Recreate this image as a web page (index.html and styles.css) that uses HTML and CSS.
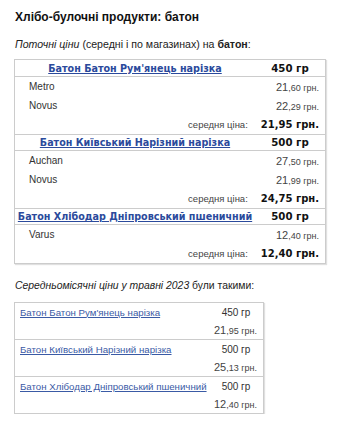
FILE: index.html
```html
<!DOCTYPE html>
<html lang="uk">
<head>
<meta charset="utf-8">
<link rel="stylesheet" href="styles.css">
</head>
<body>
<div class="page">
  <h1 class="title">Хлібо-булочні продукти: батон</h1>
  <p class="intro"><i>Поточні ціни</i> (середні і по магазинах) на <b>батон</b>:</p>

  <div class="ptable">
    <div class="prow head"><a href="#" class="pname">Батон Батон Рум'янець нарізка</a><span class="pweight">450 гр</span></div>
    <div class="prow shop"><span class="sname">Metro</span><span class="price"><span class="big">21</span>,60 грн.</span></div>
    <div class="prow shop"><span class="sname">Novus</span><span class="price"><span class="big">22</span>,29 грн.</span></div>
    <div class="prow avg"><span class="alabel">середня ціна:</span><span class="aval">21,95 грн.</span></div>

    <div class="prow head"><a href="#" class="pname">Батон Київський Нарізний нарізка</a><span class="pweight">500 гр</span></div>
    <div class="prow shop"><span class="sname">Auchan</span><span class="price"><span class="big">27</span>,50 грн.</span></div>
    <div class="prow shop"><span class="sname">Novus</span><span class="price"><span class="big">21</span>,99 грн.</span></div>
    <div class="prow avg"><span class="alabel">середня ціна:</span><span class="aval">24,75 грн.</span></div>

    <div class="prow head"><a href="#" class="pname">Батон Хлібодар Дніпровський пшеничний</a><span class="pweight">500 гр</span></div>
    <div class="prow shop"><span class="sname">Varus</span><span class="price"><span class="big">12</span>,40 грн.</span></div>
    <div class="prow avg"><span class="alabel">середня ціна:</span><span class="aval">12,40 грн.</span></div>
  </div>

  <p class="intro month"><i>Середньомісячні ціни у травні 2023</i> були такими:</p>

  <div class="mtable">
    <div class="mrow">
      <div class="mline"><a href="#" class="mname">Батон Батон Рум'янець нарізка</a><span class="mweight">450 гр</span></div>
      <div class="mline"><span class="spacer"></span><span class="mprice"><span class="big">21</span>,95 грн.</span></div>
    </div>
    <div class="mrow">
      <div class="mline"><a href="#" class="mname">Батон Київський Нарізний нарізка</a><span class="mweight">500 гр</span></div>
      <div class="mline"><span class="spacer"></span><span class="mprice"><span class="big">25</span>,13 грн.</span></div>
    </div>
    <div class="mrow">
      <div class="mline"><a href="#" class="mname">Батон Хлібодар Дніпровський пшеничний</a><span class="mweight">500 гр</span></div>
      <div class="mline"><span class="spacer"></span><span class="mprice"><span class="big">12</span>,40 грн.</span></div>
    </div>
  </div>
</div>
</body>
</html>
```
FILE: styles.css
```css
* { box-sizing: border-box; }
html, body { margin: 0; padding: 0; background: #fff; }
body { font-family: "Liberation Sans", Arial, sans-serif; color: #222; }
.page { padding: 10px 14px 0 14px; }
.title { font-size: 12px; font-weight: bold; margin: 0; line-height: 15px; color: #111; padding-left: 1px; }
.intro { font-size: 10.6px; margin: 12px 0 0 0; line-height: 14px; color: #222; padding-left: 1px; }
.ptable {
  margin-top: 8px;
  width: 312px;
  border: 1px solid #ccc;
  box-shadow: 1px 1px 1px rgba(0,0,0,0.12);
}
.prow { display: flex; align-items: center; }
.head {
  height: 17px;
  border-bottom: 1px solid #ccc;
  font-family: "DejaVu Sans", Verdana, sans-serif;
  font-weight: bold;
  font-size: 9.6px;
}
.prow.avg + .head { border-top: 1px solid #ccc; }
.pname { flex: 1; text-align: center; color: #2b4a9c; text-decoration: underline; white-space: nowrap; }
.pweight { width: 70px; text-align: center; color: #111; font-size: 10.2px; }
.shop { height: 19px; font-size: 10px; padding: 0 6px 0 14px; }
.sname { flex: 1; color: #333; }
.price { color: #444; font-size: 9px; }
.big { font-size: 11px; }
.avg { height: 19px; justify-content: flex-end; padding-right: 6px; }
.alabel { font-size: 9.5px; color: #444; margin-right: 13px; }
.aval { font-family: "DejaVu Sans", Verdana, sans-serif; font-weight: bold; font-size: 10px; color: #111; }
.month { margin-top: 15px; font-size: 10.4px; }
.mtable {
  margin-top: 9px;
  width: 250px;
  border: 1px solid #ccc;
  box-shadow: 1px 1px 1px rgba(0,0,0,0.12);
}
.mrow + .mrow { border-top: 1px solid #ccc; }
.mline { display: flex; align-items: center; height: 18px; font-size: 9.7px; padding: 0 6px 0 5px; white-space: nowrap; }
.mname { flex: 1; color: #3a5aa5; text-decoration: underline; }
.mweight { width: 42px; text-align: center; color: #333; font-size: 10px; }
.spacer { flex: 1; }
.mprice { color: #444; font-size: 9px; }
```
